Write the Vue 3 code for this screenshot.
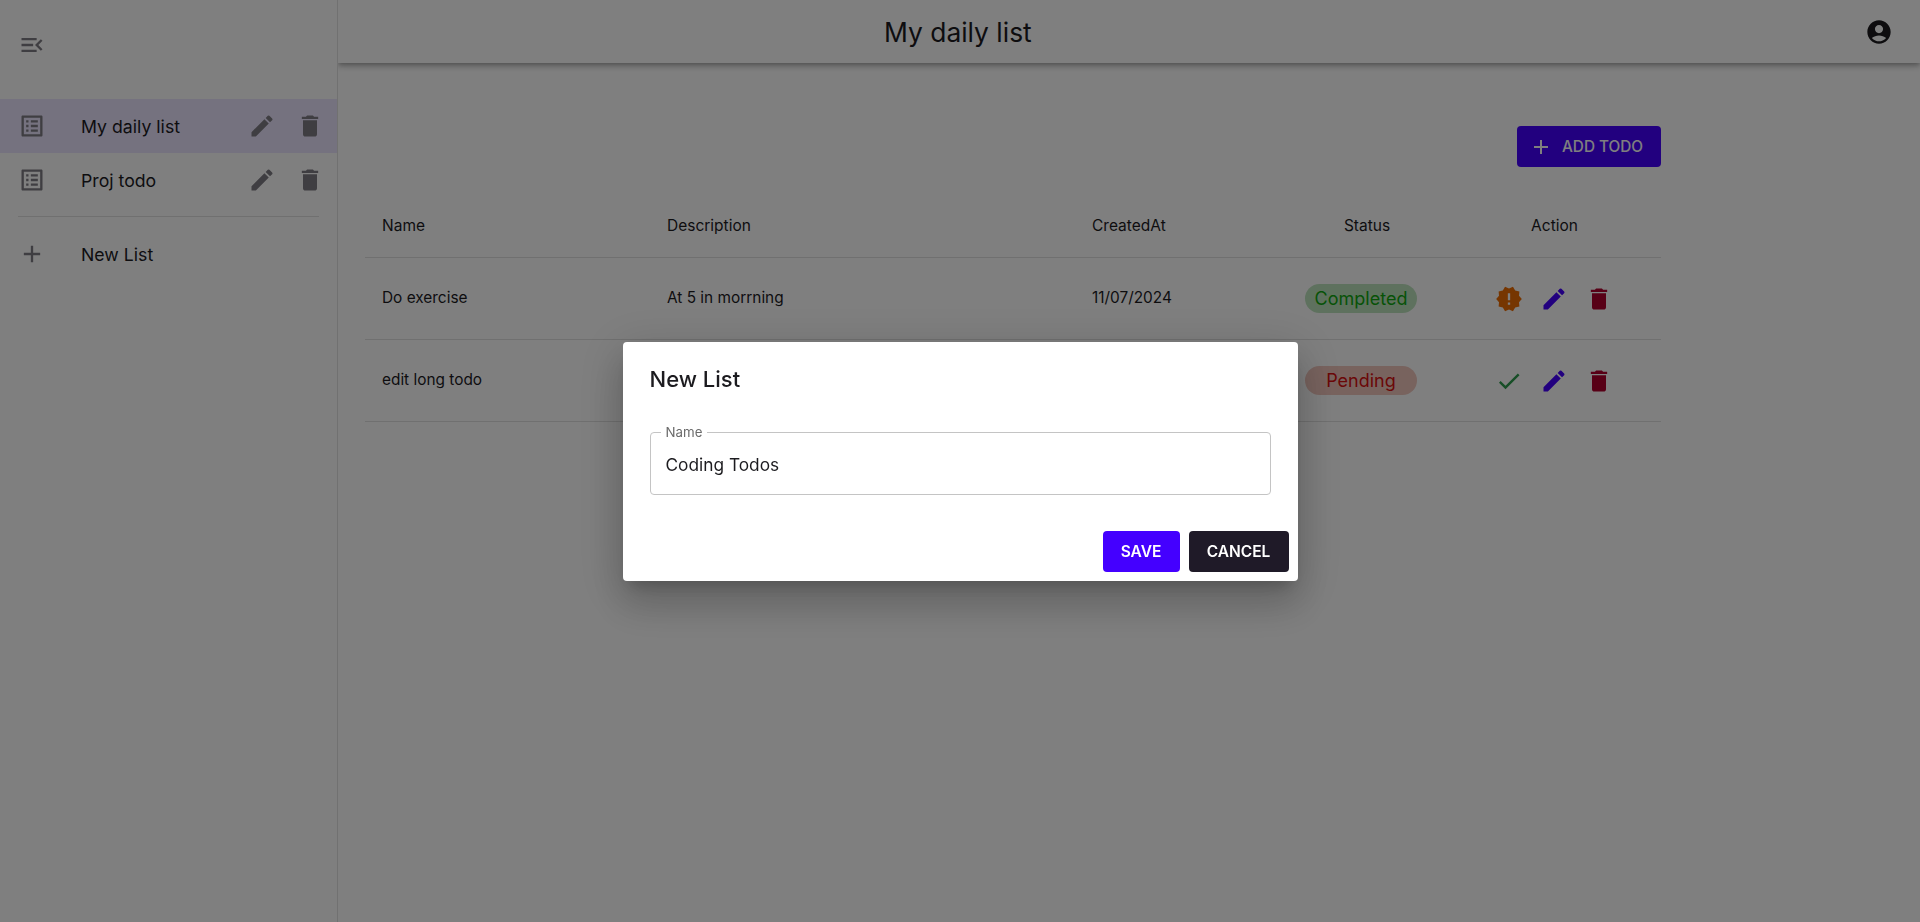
<script setup>
const lists = [
  { name: 'My daily list', active: true },
  { name: 'Proj todo', active: false },
]
const columns = ['Name', 'Description', 'CreatedAt', 'Status', 'Action']
const rows = [
  { name: 'Do exercise', description: 'At 5 in morrning', created: '11/07/2024', status: 'Completed', done: true },
  { name: 'edit long todo', description: '', created: '', status: 'Pending', done: false },
]
const P = {
  menu: 'M3 18h13v-2H3zm0-5h10v-2H3zm0-7v2h13V6zm18 9.59L17.42 12 21 8.41 19.59 7l-5 5 5 5z',
  list: 'M19 5v14H5V5h14m1.1-2H3.9c-.5 0-.9.4-.9.9v16.2c0 .4.4.9.9.9h16.2c.4 0 .9-.5.9-.9V3.9c0-.5-.5-.9-.9-.9zM11 7h6v2h-6V7zm0 4h6v2h-6v-2zm0 4h6v2h-6zM7 7h2v2H7zm0 4h2v2H7zm0 4h2v2H7z',
  edit: 'M3 17.25V21h3.75L17.81 9.94l-3.75-3.75L3 17.25zM20.71 7.04c.39-.39.39-1.02 0-1.41l-2.34-2.34a.9959.9959 0 0 0-1.41 0l-1.83 1.83 3.75 3.75 1.83-1.83z',
  del: 'M6 19c0 1.1.9 2 2 2h8c1.1 0 2-.9 2-2V7H6v12zM19 4h-3.5l-1-1h-5l-1 1H5v2h14V4z',
  add: 'M19 13h-6v6h-2v-6H5v-2h6V5h2v6h6v2z',
  alert: 'm23 12-2.44-2.78.34-3.68-3.61-.82-1.89-3.18L12 3 8.6 1.54 6.71 4.72l-3.61.81.34 3.68L1 12l2.44 2.78-.34 3.69 3.61.82 1.89 3.18L12 21l3.4 1.46 1.89-3.18 3.61-.82-.34-3.68L23 12zm-10 5h-2v-2h2v2zm0-4h-2V7h2v6z',
  check: 'M9 16.17 4.83 12l-1.42 1.41L9 19 21 7l-1.41-1.41z',
  account: 'M12 2C6.48 2 2 6.48 2 12s4.48 10 10 10 10-4.48 10-10S17.52 2 12 2zm0 4c1.93 0 3.5 1.57 3.5 3.5S13.93 13 12 13s-3.5-1.57-3.5-3.5S10.07 6 12 6zm0 14c-2.03 0-4.43-.82-6.14-2.88C7.55 15.8 9.68 15 12 15s4.45.8 6.14 2.12C16.43 19.18 14.03 20 12 20z',
}
</script>

<template>
  <div class="app">
    <aside class="side">
      <div class="side-head">
        <svg class="ic28 grey" viewBox="0 0 24 24"><path :d="P.menu" /></svg>
      </div>
      <ul class="side-list">
        <li v-for="l in lists" :key="l.name" class="side-row" :class="{ active: l.active }">
          <svg class="ic28 grey" viewBox="0 0 24 24"><path :d="P.list" /></svg>
          <span class="side-text">{{ l.name }}</span>
          <span class="side-actions">
            <svg class="ic28 grey" viewBox="0 0 24 24"><path :d="P.edit" /></svg>
            <svg class="ic28 grey" viewBox="0 0 24 24"><path :d="P.del" /></svg>
          </span>
        </li>
      </ul>
      <div class="side-divider"></div>
      <div class="side-row">
        <svg class="ic28 grey" viewBox="0 0 24 24"><path :d="P.add" /></svg>
        <span class="side-text">New List</span>
      </div>
    </aside>

    <div class="main">
      <header class="top">
        <h1 class="top-title">My daily list</h1>
        <svg class="ic-account" viewBox="0 0 24 24"><path :d="P.account" /></svg>
      </header>
      <section class="content">
        <div class="toolbar">
          <button class="add-btn">
            <svg class="ic24" viewBox="0 0 24 24"><path :d="P.add" /></svg>
            <span>ADD TODO</span>
          </button>
        </div>
        <div class="table">
          <div class="tr th">
            <div v-for="(c, i) in columns" :key="c" class="cell" :class="{ center: i > 2 }">{{ c }}</div>
          </div>
          <div v-for="r in rows" :key="r.name" class="tr td">
            <div class="cell text">{{ r.name }}</div>
            <div class="cell text">{{ r.description }}</div>
            <div class="cell text">{{ r.created }}</div>
            <div class="cell center">
              <span class="chip" :class="r.done ? 'chip-ok' : 'chip-bad'">{{ r.status }}</span>
            </div>
            <div class="cell center actions">
              <svg v-if="r.done" class="ic28 orange" viewBox="0 0 24 24"><path :d="P.alert" /></svg>
              <svg v-else class="ic28 green" viewBox="0 0 24 24"><path :d="P.check" /></svg>
              <svg class="ic28 purple" viewBox="0 0 24 24"><path :d="P.edit" /></svg>
              <svg class="ic28 red" viewBox="0 0 24 24"><path :d="P.del" /></svg>
            </div>
          </div>
        </div>
      </section>
    </div>

    <div class="backdrop">
      <div class="dialog">
        <h2 class="dialog-title">New List</h2>
        <div class="field">
          <fieldset class="outline"><legend>Name</legend></fieldset>
          <span class="field-value">Coding Todos</span>
        </div>
        <div class="dialog-actions">
          <button class="btn btn-save">SAVE</button>
          <button class="btn btn-cancel">CANCEL</button>
        </div>
      </div>
    </div>
  </div>
</template>

<style>
html, body { margin: 0; background: #fff; }
</style>

<style scoped>
.app {
  display: flex;
  height: 922px;
  overflow: hidden;
  font-family: Inter, "Liberation Sans", sans-serif;
  color: #1c1b1f;
  background: #fff;
}
svg { display: block; flex: none; fill: currentColor; }
.ic28 { width: 28px; height: 28px; }
.ic24 { width: 24px; height: 24px; }
.grey { color: #7f7d84; }
.orange { color: #ed6c02; }
.green { color: #2e9d4e; }
.purple { color: #4400ff; }
.red { color: #b0002c; }

.side {
  position: relative;
  z-index: 1;
  width: 337px;
  flex: none;
  box-sizing: content-box;
  border-right: 1px solid #e2e2e2;
  background: #fff;
}
.side-head {
  height: 99px;
  box-sizing: border-box;
  padding: 31px 0 0 18px;
}
.side-list { list-style: none; margin: 0; padding: 0; }
.side-row {
  display: flex;
  align-items: center;
  height: 54px;
  padding-left: 18px;
}
.side-row.active { background: #ebe5ff; }
.side-text {
  margin-left: 35px;
  padding-top: 1px;
  font-size: 17.7px;
  flex: 1;
}
.side-actions {
  display: flex;
  gap: 20px;
  margin-right: 13px;
}
.side-divider {
  height: 1px;
  margin: 9px 18px 10px 18px;
  background: #e0e0e0;
}

.main { flex: 1; min-width: 0; display: flex; flex-direction: column; }
.top {
  height: 63px;
  flex: none;
  display: flex;
  align-items: center;
  justify-content: space-between;
  padding: 0 27px 0 546px;
  background: #fff;
  box-shadow: 0 2px 4px -1px rgba(0,0,0,.2), 0 4px 5px rgba(0,0,0,.14), 0 1px 10px rgba(0,0,0,.12);
}
.top-title { margin: 0; font-size: 26.4px; font-weight: 400; }
.ic-account { width: 28px; height: 28px; }

.content { padding: 63px 259px 0 27px; }
.toolbar { display: flex; justify-content: flex-end; }
.add-btn {
  display: flex;
  align-items: center;
  gap: 9px;
  height: 41px;
  width: 144px;
  padding: 0 0 0 12px;
  box-sizing: border-box;
  border: 0;
  border-radius: 4px;
  background: #4400ff;
  color: #fff;
  font: 500 15.3px Inter, sans-serif;
}
.table { margin-top: 20px; }
.tr {
  display: grid;
  grid-template-columns: 286px 425px 210px 162px 213px;
  align-items: center;
  border-bottom: 1px solid #e0e0e0;
  box-sizing: border-box;
}
.th { height: 71px; padding-top: 7px; font-size: 15.5px; font-weight: 400; }
.td { height: 82px; font-size: 15.4px; }
.cell { padding: 0 16px; }
.cell:first-child { padding-left: 17px; }
.cell.text { padding-bottom: 2px; }
.center { display: flex; justify-content: center; padding: 0; }
.chip {
  width: 112px;
  height: 29px;
  margin-right: 12px;
  border-radius: 15px;
  display: flex;
  align-items: center;
  justify-content: center;
  font-size: 18px;
}
.chip-ok { background: #bde3bd; color: #0fa60f; }
.chip-bad { background: #f0c6bd; color: #d60f0f; }
.actions { gap: 17px; padding-right: 1px; }

.backdrop {
  position: fixed;
  inset: 0;
  z-index: 2;
  display: flex;
  align-items: center;
  justify-content: center;
  background: rgba(0,0,0,.5);
}
.dialog {
  width: 675px;
  height: 239px;
  box-sizing: border-box;
  padding: 0 9px 9px 27px;
  display: flex;
  flex-direction: column;
  background: #fff;
  border-radius: 4px;
  box-shadow: 0 11px 15px -7px rgba(0,0,0,.2), 0 24px 38px 3px rgba(0,0,0,.14), 0 9px 46px 8px rgba(0,0,0,.12);
}
.dialog-title {
  margin: 21px 0 0;
  font-size: 22px;
  line-height: 32px;
  font-weight: 500;
}
.field {
  position: relative;
  margin: 38px 18px 0 0;
  height: 62px;
  display: flex;
  align-items: center;
  padding: 2px 0 0 16px;
  box-sizing: border-box;
  font-size: 17.3px;
}
.outline {
  position: absolute;
  inset: -6px 0 0 0;
  margin: 0;
  padding: 0 8px;
  border: 1px solid #c4c4c4;
  border-radius: 4px;
}
.outline legend {
  margin-left: 2px;
  padding: 0 5px;
  font-size: 13.3px;
  line-height: 11px;
  color: #6b6b6b;
}
.dialog-actions {
  margin-top: auto;
  display: flex;
  justify-content: flex-end;
  gap: 9px;
}
.btn {
  height: 41px;
  border: 0;
  border-radius: 4px;
  color: #fff;
  font: 600 15.5px Inter, sans-serif;
}
.btn-save { width: 77px; background: #4400ff; }
.btn-cancel { width: 100px; background: #1f1a28; }
</style>
